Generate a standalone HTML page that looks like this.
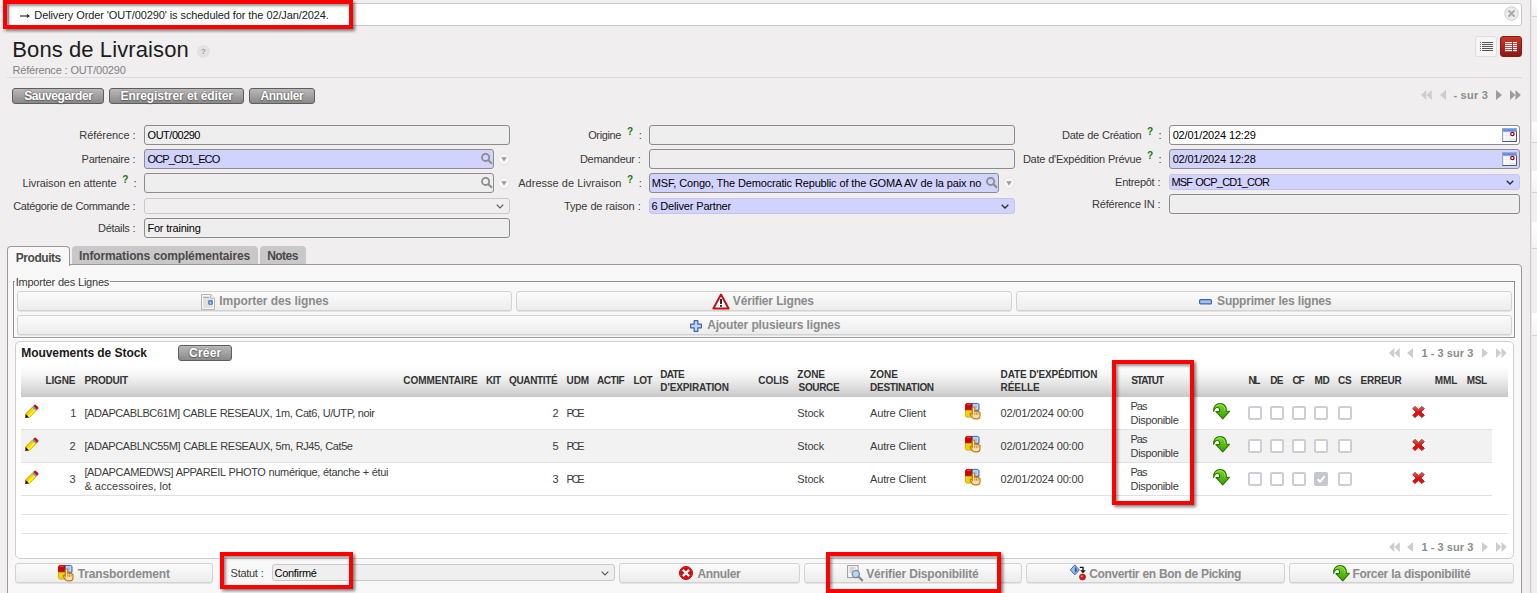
<!DOCTYPE html>
<html lang="fr">
<head>
<meta charset="utf-8">
<title>Bons de Livraison</title>
<style>
*{box-sizing:border-box;margin:0;padding:0}
html,body{width:1537px;height:593px;overflow:hidden}
body{background:#f0eeee;font-family:"Liberation Sans",Arial,sans-serif;font-size:12px;color:#252525;position:relative}
.a{position:absolute;white-space:nowrap}
svg{position:absolute;overflow:visible}
#strip{left:1530px;top:0;width:7px;height:593px;background:#f1efef;border-left:1px solid #cdcbcb;box-shadow:inset 1px 0 0 #e8e6e6}
#strip i{position:absolute;left:1px;width:5px;background:linear-gradient(#fff,#f3f3f3);border-bottom:1px solid #d4d2d2}
#notif{left:8px;top:3px;width:1514px;height:23px;background:#fff;border:1px solid #c9c9c9;border-radius:3px}
.nt{color:#222}
.red{border:4px solid #fe0000;box-shadow:2px 2px 3px rgba(0,0,0,.5), inset 3px 3px 3px -1px rgba(0,0,0,.42)}
.h1{color:#1c1c1c}
.sub{color:#818181}
#hr{left:7px;top:77px;width:1515px;height:1px;background:#dcdada}
.btn{height:16px;border:1px solid #5e5e5e;border-radius:3px;background:linear-gradient(#b9b9b9,#8a8a8a)}
.bt{color:#fff;text-shadow:0 0 2px #555,0 1px 1px #666}
.lbl{color:#3a3a3a}
.q{color:#117a11}
.inp{height:20px;border:1px solid #8c8c8c;border-radius:3px;background:#efeeee}
.req{background:#d2d2ff}
.wht{background:#fff}
.it{color:#000}
.sel{height:16px;border:1px solid #c9c9c9;border-radius:3px;background:#f0eeee}
.sel.req{border-color:#c4c4f0;background:#d2d2ff}
.tab{top:246px;height:18px;background:#c9c7c7;border-radius:4px 4px 0 0}
.tab.on{background:#f9f8f8;border:1px solid #999;border-bottom:none;height:20px}
.tt{color:#4a4a4a}
#tbox{left:7px;top:264px;width:1515px;height:340px;border:1px solid #999;border-radius:0 4px 0 0;background:#f9f8f8}
#fs{left:13px;top:281px;width:1502px;height:57px;border:1px solid #8e8e8e;border-bottom-color:#9a9a9a;box-shadow:inset 1px 1px 0 #fff,1px 1px 0 #fff}
#lgbg{left:15px;top:279px;width:95px;height:5px;background:#f9f8f8}
.wbtn{height:20px;border:1px solid #d2d2d2;border-radius:3px;background:linear-gradient(#fbfbfb,#ececec);box-shadow:0 1px 0 #e4e4e4}
.wt{color:#8b8b8b}
#lbox{left:15px;top:341px;width:1499px;height:218px;border:1px solid #cfcfcf;border-radius:5px;background:#fff}
.lt{color:#1a1a1a}
#hd{left:21px;top:365px;width:1487px;height:32px;background:linear-gradient(#fff 0%,#f6f6f6 30%,#dedede 70%,#c6c6c6 100%)}
.th{color:#333}
.td{color:#3c3c3c}
.pg{color:#8c8c8c}
.row{left:21px;width:1471px;height:33px;border-bottom:1px solid #e0e0e0}
.row.alt{background:#f2f2f2}
.ln{left:21px;width:1487px;height:1px;background:#e2e2e2}
.cb{width:14px;height:14px;border:2px solid #cdcdd5;border-radius:2px;background:#fff}
.cb.on{background:#c6c6ce;border-color:#c6c6ce}
</style>
</head>
<body>
<div id="strip" class="a">
<i style="top:0px;height:17px"></i>
<i style="top:122px;height:21px"></i>
<i style="top:171px;height:22px"></i>
<i style="top:222px;height:27px"></i>
<i style="top:313px;height:23px"></i>
</div>
<div id="notif" class="a"></div>
<svg style="left:20px;top:13px" width="10" height="6" viewBox="0 0 10 6"><path d="M0 3h8" fill="none" stroke="#2a1a1a" stroke-width="1.100"/><path d="M6.600.800L10 3 6.600 5.200 7.400 3z" fill="#2a1a1a"/></svg>
<div class="a nt" style="left:34.30px;top:9.00px;font-size:11px;line-height:13px;letter-spacing:-0.108px;word-spacing:0.108px;">Delivery Order 'OUT/00290' is scheduled for the 02/Jan/2024.</div>
<svg style="left:1504px;top:6px" width="15" height="15" viewBox="0 0 15 15"><circle cx="7.5" cy="7.5" r="6.8" fill="#ececec" stroke="#cfcfcf"/><path d="M5 5l5 5M10 5l-5 5" stroke="#a8a8a8" stroke-width="1.8" stroke-linecap="round"/></svg>
<div class="a h1" style="left:12.30px;top:36.90px;font-size:22px;line-height:26px;letter-spacing:0.114px;word-spacing:-0.114px;">Bons de Livraison</div>
<svg style="left:197px;top:44.500px" width="13" height="13" viewBox="0 0 13 13"><circle cx="6.500" cy="6.500" r="6" fill="#e4e2e2" stroke="#dad8d8" stroke-width=".6"/><text x="6.500" y="9.300" font-size="8" font-weight="bold" fill="#9c9c9c" text-anchor="middle" font-family="Liberation Sans,sans-serif">?</text></svg>
<div class="a sub" style="left:12.60px;top:63.50px;font-size:11px;line-height:13px;letter-spacing:-0.200px;word-spacing:0.200px;">Référence : OUT/00290</div>
<div id="hr" class="a"></div>
<div class="a" style="left:1475px;top:36px;width:22px;height:21px;background:#f6f6f6;border:1px solid #dedede;border-radius:3px"></div>
<svg style="left:1480px;top:42px" width="13" height="10" viewBox="0 0 13 10"><rect x="0" y="0" width="1" height="1" fill="#666"/><rect x="2" y="0" width="11" height="1" fill="#555"/><rect x="0" y="2" width="1" height="1" fill="#666"/><rect x="2" y="2" width="11" height="1" fill="#555"/><rect x="0" y="4" width="1" height="1" fill="#666"/><rect x="2" y="4" width="11" height="1" fill="#555"/><rect x="0" y="6" width="1" height="1" fill="#666"/><rect x="2" y="6" width="11" height="1" fill="#555"/><rect x="0" y="8" width="1" height="1" fill="#666"/><rect x="2" y="8" width="11" height="1" fill="#555"/></svg>
<div class="a" style="left:1500px;top:36px;width:22px;height:21px;background:linear-gradient(#c8372d,#8f1712);border:1px solid #8a1a14;border-radius:3px"></div>
<svg style="left:1505px;top:42px" width="12" height="10" viewBox="0 0 12 10"><rect x="0" y="0" width="7" height="1.2" fill="#fff"/><rect x="8" y="0" width="4" height="1.2" fill="#fff"/><rect x="0" y="2" width="7" height="1.2" fill="#fff"/><rect x="8" y="2" width="4" height="1.2" fill="#fff"/><rect x="0" y="4" width="7" height="1.2" fill="#fff"/><rect x="8" y="4" width="4" height="1.2" fill="#fff"/><rect x="0" y="6" width="7" height="1.2" fill="#fff"/><rect x="8" y="6" width="4" height="1.2" fill="#fff"/><rect x="0" y="8" width="7" height="1.2" fill="#fff"/><rect x="8" y="8" width="4" height="1.2" fill="#fff"/></svg>
<div class="a btn" style="left:12px;top:88px;width:92px"></div>
<div class="a bt" style="left:24.20px;top:89.30px;font-size:12px;line-height:14px;letter-spacing:-0.392px;font-weight:bold;">Sauvegarder</div>
<div class="a btn" style="left:109px;top:88px;width:135px"></div>
<div class="a bt" style="left:120.50px;top:89.30px;font-size:12px;line-height:14px;letter-spacing:-0.087px;word-spacing:0.087px;font-weight:bold;">Enregistrer et éditer</div>
<div class="a btn" style="left:249px;top:88px;width:66px"></div>
<div class="a bt" style="left:260.50px;top:89.30px;font-size:12px;line-height:14px;letter-spacing:-0.355px;font-weight:bold;">Annuler</div>
<svg style="left:1421px;top:89.8px" width="11" height="10" viewBox="0 0 11 10"><path d="M5.300 0v10L0 5zM10.800 0v10L5.500 5z" fill="#cdcdcd"/></svg>
<svg style="left:1439.5px;top:89.8px" width="6" height="10" viewBox="0 0 6 10"><path d="M6 0v10L0 5z" fill="#cdcdcd"/></svg>
<div class="a pg" style="left:1453.40px;top:88.50px;font-size:11px;line-height:13px;letter-spacing:0.350px;word-spacing:-0.350px;font-weight:bold;">- sur 3</div>
<svg style="left:1495.5px;top:89.8px" width="6" height="10" viewBox="0 0 6 10"><path d="M0 0v10l6-5z" fill="#9c9c9c"/></svg>
<svg style="left:1509.5px;top:89.8px" width="11" height="10" viewBox="0 0 11 10"><path d="M0 0v10l5.300-5zM5.500 0v10l5.300-5z" fill="#9c9c9c"/></svg>
<div class="a lbl" style="left:79.30px;top:128.50px;font-size:11px;line-height:13px;letter-spacing:-0.063px;word-spacing:0.063px;">Référence :</div>
<div class="a inp" style="left:144px;top:125px;width:366px"></div>
<div class="a it" style="left:147.60px;top:128.70px;font-size:11px;line-height:13px;letter-spacing:-0.496px;">OUT/00290</div>
<div class="a lbl" style="left:81.60px;top:152.50px;font-size:11px;line-height:13px;letter-spacing:-0.287px;word-spacing:0.287px;">Partenaire :</div>
<div class="a inp req" style="left:144px;top:149px;width:350px"></div>
<div class="a it" style="left:147.60px;top:152.70px;font-size:11px;line-height:13px;letter-spacing:-0.932px;">OCP_CD1_ECO</div>
<svg style="left:481px;top:153.2px" width="12" height="12" viewBox="0 0 12 12"><circle cx="4.600" cy="4.400" r="3.600" fill="none" stroke="#8c8c8c" stroke-width="1.800"/><path d="M7.400 7.200l3.100 3" stroke="#8c8c8c" stroke-width="1.900" stroke-linecap="round"/></svg>
<svg style="left:497.6px;top:152.8px" width="12" height="12" viewBox="0 0 12 12"><circle cx="6" cy="6" r="5.700" fill="#f7f6f6" stroke="#e2e0e0" stroke-width=".8"/><path d="M3.200 4.300h5.600L6 8.400z" fill="#9a9a9a"/></svg>
<div class="a lbl" style="left:22.50px;top:176.50px;font-size:11px;line-height:13px;letter-spacing:-0.118px;word-spacing:0.118px;">Livraison en attente</div>
<div class="a q" style="left:122.30px;top:173.50px;font-size:10px;line-height:12px;letter-spacing:-0.700px;font-weight:bold;">?</div>
<div class="a lbl" style="left:133.50px;top:176.50px;font-size:11px;line-height:13px;letter-spacing:-1.752px;">:</div>
<div class="a inp" style="left:144px;top:173px;width:350px"></div>
<svg style="left:481px;top:177.2px" width="12" height="12" viewBox="0 0 12 12"><circle cx="4.600" cy="4.400" r="3.600" fill="none" stroke="#8c8c8c" stroke-width="1.800"/><path d="M7.400 7.200l3.100 3" stroke="#8c8c8c" stroke-width="1.900" stroke-linecap="round"/></svg>
<svg style="left:497.6px;top:176.8px" width="12" height="12" viewBox="0 0 12 12"><circle cx="6" cy="6" r="5.700" fill="#f7f6f6" stroke="#e2e0e0" stroke-width=".8"/><path d="M3.200 4.300h5.600L6 8.400z" fill="#9a9a9a"/></svg>
<div class="a lbl" style="left:13.20px;top:199.50px;font-size:11px;line-height:13px;letter-spacing:-0.349px;word-spacing:0.349px;">Catégorie de Commande :</div>
<div class="a sel" style="left:144px;top:198px;width:366px"></div>
<svg style="left:496px;top:203.5px" width="8" height="5" viewBox="0 0 8 5"><path d="M.7.7L4 4 7.3.7" fill="none" stroke="#555" stroke-width="1.1"/></svg>
<div class="a lbl" style="left:98.00px;top:221.70px;font-size:11px;line-height:13px;letter-spacing:-0.305px;word-spacing:0.305px;">Détails :</div>
<div class="a inp" style="left:144px;top:218px;width:366px"></div>
<div class="a it" style="left:147.40px;top:221.70px;font-size:11px;line-height:13px;letter-spacing:-0.223px;word-spacing:0.223px;">For training</div>
<div class="a lbl" style="left:588.20px;top:128.50px;font-size:11px;line-height:13px;letter-spacing:-0.379px;">Origine</div>
<div class="a q" style="left:627.00px;top:125.50px;font-size:10px;line-height:12px;letter-spacing:-0.700px;font-weight:bold;">?</div>
<div class="a lbl" style="left:638.80px;top:128.50px;font-size:11px;line-height:13px;letter-spacing:-1.752px;">:</div>
<div class="a inp" style="left:649px;top:125px;width:366px"></div>
<div class="a lbl" style="left:580.00px;top:152.50px;font-size:11px;line-height:13px;letter-spacing:-0.320px;word-spacing:0.320px;">Demandeur :</div>
<div class="a inp" style="left:649px;top:149px;width:366px"></div>
<div class="a lbl" style="left:518.20px;top:176.50px;font-size:11px;line-height:13px;letter-spacing:0.029px;word-spacing:-0.029px;">Adresse de Livraison</div>
<div class="a q" style="left:627.00px;top:173.50px;font-size:10px;line-height:12px;letter-spacing:-0.700px;font-weight:bold;">?</div>
<div class="a lbl" style="left:638.80px;top:176.50px;font-size:11px;line-height:13px;letter-spacing:-1.752px;">:</div>
<div class="a inp req" style="left:649px;top:173px;width:350px"></div>
<div class="a it" style="left:651.80px;top:176.70px;font-size:11px;line-height:13px;letter-spacing:-0.171px;word-spacing:0.171px;">MSF, Congo, The Democratic Republic of the GOMA AV de la paix no</div>
<svg style="left:986px;top:177.2px" width="12" height="12" viewBox="0 0 12 12"><circle cx="4.600" cy="4.400" r="3.600" fill="none" stroke="#8c8c8c" stroke-width="1.800"/><path d="M7.400 7.200l3.100 3" stroke="#8c8c8c" stroke-width="1.900" stroke-linecap="round"/></svg>
<svg style="left:1002.6px;top:176.8px" width="12" height="12" viewBox="0 0 12 12"><circle cx="6" cy="6" r="5.700" fill="#f7f6f6" stroke="#e2e0e0" stroke-width=".8"/><path d="M3.200 4.300h5.600L6 8.400z" fill="#9a9a9a"/></svg>
<div class="a lbl" style="left:564.00px;top:199.50px;font-size:11px;line-height:13px;letter-spacing:-0.130px;word-spacing:0.130px;">Type de raison :</div>
<div class="a sel req" style="left:649px;top:198px;width:366px"></div>
<div class="a it" style="left:651.40px;top:199.50px;font-size:11px;line-height:13px;letter-spacing:-0.195px;word-spacing:0.195px;">6 Deliver Partner</div>
<svg style="left:1001px;top:203.5px" width="8" height="5" viewBox="0 0 8 5"><path d="M.7.7L4 4 7.3.7" fill="none" stroke="#2a2a2a" stroke-width="1.25"/></svg>
<div class="a lbl" style="left:1062.10px;top:128.50px;font-size:11px;line-height:13px;letter-spacing:-0.282px;word-spacing:0.282px;">Date de Création</div>
<div class="a q" style="left:1147.00px;top:125.50px;font-size:10px;line-height:12px;letter-spacing:-0.700px;font-weight:bold;">?</div>
<div class="a lbl" style="left:1158.60px;top:128.50px;font-size:11px;line-height:13px;letter-spacing:-1.752px;">:</div>
<div class="a inp wht" style="left:1169px;top:125px;width:351px"></div>
<div class="a it" style="left:1172.70px;top:128.70px;font-size:11px;line-height:13px;letter-spacing:-0.181px;word-spacing:0.181px;">02/01/2024 12:29</div>
<svg style="left:1502px;top:128px" width="15" height="14" viewBox="0 0 15 14"><rect x=".5" y=".5" width="14" height="13" fill="#e9e9e9" stroke="#9aa6c0"/><path d="M.5 13.500h14v-10" fill="none" stroke="#4a5a80" stroke-width="1"/><rect x="1" y="1" width="13" height="2.600" fill="#5a86e0"/><rect x="1" y=".5" width="13" height="1" fill="#8aaef0"/><path d="M2 5h2.300v2.300H2zM5.200 5h2.300v2.300H5.200zM2 8.200h2.300v2.300H2zM5.200 8.200h2.300v2.300H5.200zM8.400 8.200h2.300v2.300H8.400zM11.400 8.200h2v2.300h-2zM2 11.300h2.300v1.500H2zM5.200 11.300h2.300v1.500H5.200z" fill="#fff"/><circle cx="10.400" cy="6" r="1.700" fill="#fff" stroke="#960c0c" stroke-width="1.200"/></svg>
<div class="a lbl" style="left:1022.90px;top:152.50px;font-size:11px;line-height:13px;letter-spacing:-0.243px;word-spacing:0.243px;">Date d'Expédition Prévue</div>
<div class="a q" style="left:1147.00px;top:149.50px;font-size:10px;line-height:12px;letter-spacing:-0.700px;font-weight:bold;">?</div>
<div class="a lbl" style="left:1158.60px;top:152.50px;font-size:11px;line-height:13px;letter-spacing:-1.752px;">:</div>
<div class="a inp req" style="left:1169px;top:149px;width:351px"></div>
<div class="a it" style="left:1172.70px;top:152.70px;font-size:11px;line-height:13px;letter-spacing:-0.181px;word-spacing:0.181px;">02/01/2024 12:28</div>
<svg style="left:1502px;top:152px" width="15" height="14" viewBox="0 0 15 14"><rect x=".5" y=".5" width="14" height="13" fill="#e9e9e9" stroke="#9aa6c0"/><path d="M.5 13.500h14v-10" fill="none" stroke="#4a5a80" stroke-width="1"/><rect x="1" y="1" width="13" height="2.600" fill="#5a86e0"/><rect x="1" y=".5" width="13" height="1" fill="#8aaef0"/><path d="M2 5h2.300v2.300H2zM5.200 5h2.300v2.300H5.200zM2 8.200h2.300v2.300H2zM5.200 8.200h2.300v2.300H5.200zM8.400 8.200h2.300v2.300H8.400zM11.400 8.200h2v2.300h-2zM2 11.300h2.300v1.500H2zM5.200 11.300h2.300v1.500H5.200z" fill="#fff"/><circle cx="10.400" cy="6" r="1.700" fill="#fff" stroke="#960c0c" stroke-width="1.200"/></svg>
<div class="a lbl" style="left:1115.10px;top:175.50px;font-size:11px;line-height:13px;letter-spacing:-0.286px;word-spacing:0.286px;">Entrepôt :</div>
<div class="a sel req" style="left:1169px;top:174px;width:351px"></div>
<div class="a it" style="left:1171.40px;top:175.50px;font-size:11px;line-height:13px;letter-spacing:-0.784px;word-spacing:0.784px;">MSF OCP_CD1_COR</div>
<svg style="left:1506px;top:179.5px" width="8" height="5" viewBox="0 0 8 5"><path d="M.7.7L4 4 7.3.7" fill="none" stroke="#2a2a2a" stroke-width="1.25"/></svg>
<div class="a lbl" style="left:1092.10px;top:197.50px;font-size:11px;line-height:13px;letter-spacing:-0.229px;word-spacing:0.229px;">Référence IN :</div>
<div class="a inp" style="left:1169px;top:194px;width:351px"></div>
<div id="tbox" class="a"></div>
<div class="a tab on" style="left:7px;width:63px"></div>
<div class="a tt" style="left:15.80px;top:250.60px;font-size:12px;line-height:14px;letter-spacing:-0.466px;font-weight:bold;">Produits</div>
<div class="a tab" style="left:72px;width:186px"></div>
<div class="a tt" style="left:79.00px;top:248.70px;font-size:12px;line-height:14px;letter-spacing:-0.132px;word-spacing:0.132px;font-weight:bold;">Informations complémentaires</div>
<div class="a tab" style="left:260px;width:46px"></div>
<div class="a tt" style="left:267.20px;top:248.70px;font-size:12px;line-height:14px;letter-spacing:-0.533px;font-weight:bold;">Notes</div>
<div id="fs" class="a"></div><div id="lgbg" class="a"></div>
<div class="a lbl" style="left:15.70px;top:276.00px;font-size:11px;line-height:13px;letter-spacing:-0.226px;word-spacing:0.226px;">Importer des Lignes</div>
<div class="a wbtn" style="left:17px;top:291px;width:495px"></div>
<div class="a wbtn" style="left:516px;top:291px;width:496px"></div>
<div class="a wbtn" style="left:1016px;top:291px;width:496px"></div>
<div class="a wbtn" style="left:17px;top:315px;width:1495px"></div>
<svg style="left:201px;top:294px" width="14" height="16" viewBox="0 0 14 16"><path d="M.5.500h9.300l3.700 3.700v11.300H.5z" fill="#dfe1dc" stroke="#b4b4b4"/><path d="M1.500 1.500h8l3 3v10h-11z" fill="none" stroke="#f8f8f8"/><path d="M9.800.500v3.700h3.700" fill="#fafafa" stroke="#b4b4b4"/><path d="M2.200 3.500h5.600" stroke="#c89ac8" stroke-width="1"/><rect x="7" y="6" width="5" height="5" rx="1.400" fill="#5b8cd6"/><path d="M8.600 9.600l.9-2 .9 2z" fill="#dce8fa"/></svg>
<div class="a wt" style="left:219.30px;top:294.30px;font-size:12px;line-height:14px;letter-spacing:-0.075px;word-spacing:0.075px;font-weight:bold;">Importer des lignes</div>
<svg style="left:712px;top:293px" width="18" height="17" viewBox="0 0 18 17"><path d="M9 1.600L16.600 15.500H1.400z" fill="#fff" stroke="#c41010" stroke-width="2" stroke-linejoin="round"/><rect x="8.100" y="6" width="1.800" height="5" fill="#111"/><rect x="8.100" y="12" width="1.800" height="1.800" fill="#111"/></svg>
<div class="a wt" style="left:732.80px;top:294.30px;font-size:12px;line-height:14px;letter-spacing:-0.167px;word-spacing:0.167px;font-weight:bold;">Vérifier Lignes</div>
<svg style="left:1199px;top:299px" width="13" height="6" viewBox="0 0 13 6"><rect x=".6" y=".6" width="11.800" height="4.300" rx="1" fill="#a9c0ea" stroke="#3b64b4" stroke-width="1.200"/></svg>
<div class="a wt" style="left:1217.10px;top:294.30px;font-size:12px;line-height:14px;letter-spacing:-0.221px;word-spacing:0.221px;font-weight:bold;">Supprimer les lignes</div>
<svg style="left:690px;top:320px" width="12" height="12" viewBox="0 0 12 12"><path d="M4.200.6h3.600v3.600h3.600v3.600H7.800v3.600H4.200V7.800H.6V4.200h3.600z" fill="#c5d6f4" stroke="#3b64b4" stroke-width="1.200" stroke-linejoin="round"/></svg>
<div class="a wt" style="left:707.20px;top:318.30px;font-size:12px;line-height:14px;letter-spacing:-0.162px;word-spacing:0.162px;font-weight:bold;">Ajouter plusieurs lignes</div>
<div id="lbox" class="a"></div>
<div class="a lt" style="left:21.30px;top:345.80px;font-size:12px;line-height:14px;letter-spacing:-0.064px;word-spacing:0.064px;font-weight:bold;">Mouvements de Stock</div>
<div class="a btn" style="left:178px;top:345px;width:54px"></div>
<div class="a bt" style="left:189.00px;top:346.40px;font-size:12px;line-height:14px;letter-spacing:0.212px;font-weight:bold;">Créer</div>
<svg style="left:1388.5px;top:348.2px" width="11" height="10" viewBox="0 0 11 10"><path d="M5.300 0v10L0 5zM10.800 0v10L5.500 5z" fill="#cdcdcd"/></svg>
<svg style="left:1407px;top:348.2px" width="6" height="10" viewBox="0 0 6 10"><path d="M6 0v10L0 5z" fill="#cdcdcd"/></svg>
<div class="a pg" style="left:1421.50px;top:346.90px;font-size:11px;line-height:13px;letter-spacing:0.088px;word-spacing:-0.088px;font-weight:bold;">1 - 3 sur 3</div>
<svg style="left:1481.5px;top:348.2px" width="6" height="10" viewBox="0 0 6 10"><path d="M0 0v10l6-5z" fill="#cdcdcd"/></svg>
<svg style="left:1495.5px;top:348.2px" width="11" height="10" viewBox="0 0 11 10"><path d="M0 0v10l5.300-5zM5.500 0v10l5.300-5z" fill="#cdcdcd"/></svg>
<div id="hd" class="a"></div>
<div class="a th" style="left:45.60px;top:374.30px;font-size:10px;line-height:13px;letter-spacing:-0.187px;font-weight:bold;">LIGNE</div>
<div class="a th" style="left:84.60px;top:374.30px;font-size:10px;line-height:13px;letter-spacing:-0.233px;font-weight:bold;">PRODUIT</div>
<div class="a th" style="left:403.30px;top:374.30px;font-size:10px;line-height:13px;letter-spacing:-0.050px;font-weight:bold;">COMMENTAIRE</div>
<div class="a th" style="left:486.10px;top:374.30px;font-size:10px;line-height:13px;letter-spacing:-0.600px;font-weight:bold;">KIT</div>
<div class="a th" style="left:509.10px;top:374.30px;font-size:10px;line-height:13px;letter-spacing:-0.371px;font-weight:bold;">QUANTITÉ</div>
<div class="a th" style="left:566.60px;top:374.30px;font-size:10px;line-height:13px;letter-spacing:-0.188px;font-weight:bold;">UDM</div>
<div class="a th" style="left:597.00px;top:374.30px;font-size:10px;line-height:13px;letter-spacing:-0.462px;font-weight:bold;">ACTIF</div>
<div class="a th" style="left:633.60px;top:374.30px;font-size:10px;line-height:13px;letter-spacing:-0.500px;font-weight:bold;">LOT</div>
<div class="a th" style="left:758.30px;top:374.30px;font-size:10px;line-height:13px;letter-spacing:-0.062px;font-weight:bold;">COLIS</div>
<div class="a th" style="left:1131.20px;top:374.30px;font-size:10px;line-height:13px;letter-spacing:-0.990px;font-weight:bold;">STATUT</div>
<div class="a th" style="left:1248.50px;top:374.30px;font-size:10px;line-height:13px;letter-spacing:-1.425px;font-weight:bold;">NL</div>
<div class="a th" style="left:1270.30px;top:374.30px;font-size:10px;line-height:13px;letter-spacing:-0.800px;font-weight:bold;">DE</div>
<div class="a th" style="left:1292.40px;top:374.30px;font-size:10px;line-height:13px;letter-spacing:-1.025px;font-weight:bold;">CF</div>
<div class="a th" style="left:1314.40px;top:374.30px;font-size:10px;line-height:13px;letter-spacing:-0.150px;font-weight:bold;">MD</div>
<div class="a th" style="left:1338.00px;top:374.30px;font-size:10px;line-height:13px;letter-spacing:-0.100px;font-weight:bold;">CS</div>
<div class="a th" style="left:1360.50px;top:374.30px;font-size:10px;line-height:13px;letter-spacing:-0.205px;font-weight:bold;">ERREUR</div>
<div class="a th" style="left:1434.70px;top:374.30px;font-size:10px;line-height:13px;letter-spacing:0.012px;font-weight:bold;">MML</div>
<div class="a th" style="left:1466.70px;top:374.30px;font-size:10px;line-height:13px;letter-spacing:-0.350px;font-weight:bold;">MSL</div>
<div class="a th" style="left:660.30px;top:368.00px;font-size:10px;line-height:13px;letter-spacing:-0.725px;font-weight:bold;">DATE</div>
<div class="a th" style="left:660.30px;top:381.00px;font-size:10px;line-height:13px;letter-spacing:-0.116px;font-weight:bold;">D'EXPIRATION</div>
<div class="a th" style="left:797.30px;top:368.00px;font-size:10px;line-height:13px;letter-spacing:-0.025px;font-weight:bold;">ZONE</div>
<div class="a th" style="left:798.60px;top:381.00px;font-size:10px;line-height:13px;letter-spacing:-0.355px;font-weight:bold;">SOURCE</div>
<div class="a th" style="left:870.10px;top:368.00px;font-size:10px;line-height:13px;letter-spacing:0.042px;font-weight:bold;">ZONE</div>
<div class="a th" style="left:870.10px;top:381.00px;font-size:10px;line-height:13px;letter-spacing:-0.305px;font-weight:bold;">DESTINATION</div>
<div class="a th" style="left:1000.60px;top:368.00px;font-size:10px;line-height:13px;letter-spacing:-0.175px;word-spacing:0.175px;font-weight:bold;">DATE D'EXPÉDITION</div>
<div class="a th" style="left:1000.60px;top:381.00px;font-size:10px;line-height:13px;letter-spacing:-0.090px;font-weight:bold;">RÉELLE</div>
<div class="a row" style="top:397px"></div>
<svg style="left:25px;top:405px" width="13" height="13" viewBox="0 0 12.300 12.300"><path d="M.5 8.600L7.200 1.900l3.300 3.300L3.800 11.900z" fill="#ffd000" stroke="#d08a00" stroke-width=".9"/><path d="M3 10.900L9.500 4.400" stroke="#ffff00" stroke-width="1.700"/><path d="M6.900 2.200l.9-.9 3.300 3.300-.9.900z" fill="#44a8ff"/><path d="M8.100 1l.6-.6c.5-.5 1.300-.5 1.800 0l1.500 1.500c.5.500.5 1.300 0 1.800l-.6.600z" fill="#e00000" stroke="#a00000" stroke-width=".6"/><path d="M.5 8.600L.2 12.200l3.600-.3z" fill="#111"/></svg>
<div class="a td" style="left:70.20px;top:406.80px;font-size:11px;line-height:13px;letter-spacing:-1.705px;">1</div>
<div class="a td" style="left:84.40px;top:406.80px;font-size:11px;line-height:13px;letter-spacing:-0.412px;word-spacing:0.412px;">[ADAPCABLBC61M] CABLE RESEAUX, 1m, Cat6, U/UTP, noir</div>
<div class="a td" style="left:552.40px;top:406.80px;font-size:11px;line-height:13px;letter-spacing:-1.005px;">2</div>
<div class="a td" style="left:566.60px;top:406.80px;font-size:11px;line-height:13px;letter-spacing:-2.353px;">PCE</div>
<div class="a td" style="left:797.30px;top:406.80px;font-size:11px;line-height:13px;letter-spacing:-0.157px;">Stock</div>
<div class="a td" style="left:870.00px;top:406.80px;font-size:11px;line-height:13px;letter-spacing:-0.148px;word-spacing:0.148px;">Autre Client</div>
<svg style="left:965px;top:403px" width="17" height="17" viewBox="0 0 17 17"><rect x=".5" y=".5" width="13.500" height="13.500" rx="1.800" fill="#fff" stroke="none"/><path d="M2 .4h5.200v6.900H.4V2c0-.9.700-1.600 1.600-1.600z" fill="#cc0000" stroke="#a40000" stroke-width=".8"/><path d="M7.200.4h5.200c.9 0 1.600.7 1.600 1.600v5.300H7.200z" fill="#9cc0ee" stroke="#2c5aa0" stroke-width=".9"/><path d="M8.600 1.800h4v4h-4z" fill="none" stroke="#d6e6fa" stroke-width=".8"/><path d="M.4 7.300h6.800v6.800H2c-.9 0-1.600-.7-1.600-1.600z" fill="#edd400" stroke="#c4a000" stroke-width=".8"/><path d="M1.800 1.700h4" stroke="#ef6a6a" stroke-width=".7"/><path d="M8.600 4c.8 0 1.200.5 1.200 1.300v3.100h.3c.3-.5 1.300-.5 1.600.2.500-.4 1.400-.3 1.600.4.700-.3 1.700.1 1.700 1v2.600c0 2-1.200 3.300-3 3.300H9.800c-1.200 0-2-.5-2.700-1.500L5.300 11.600c-.5-.8.500-1.600 1.200-1l.8.800V5.300c0-.8.500-1.300 1.300-1.300z" fill="#fce0b4" stroke="#c47a10" stroke-width="1.200"/><path d="M9.800 9.500v2.200M11.400 9.700v2M13 10v1.700" stroke="#c47a10" stroke-width=".9"/></svg>
<div class="a td" style="left:1000.60px;top:406.80px;font-size:11px;line-height:13px;letter-spacing:-0.195px;word-spacing:0.195px;">02/01/2024 00:00</div>
<div class="a td" style="left:1130.60px;top:399.90px;font-size:11px;line-height:13px;letter-spacing:-1.074px;">Pas</div>
<div class="a td" style="left:1130.60px;top:413.70px;font-size:11px;line-height:13px;letter-spacing:-0.352px;">Disponible</div>
<svg style="left:1212.5px;top:402.5px" width="17" height="17" viewBox="0 0 17 17"><defs><linearGradient id="gg" x1="0" y1="0" x2="0" y2="1"><stop offset="0" stop-color="#78dc1e"/><stop offset="1" stop-color="#3c9c0a"/></linearGradient></defs><path d="M.6 8.400C.1 3.900 2.900.6 7.100.6c4.100 0 6.300 3 6.300 7.700h3l-6.600 7.600-6.900-7.300h3.700c.3-2.600-.5-4.400-2.100-4.400C2.600 4.200 1.500 5.800.6 8.400z" fill="url(#gg)" stroke="#2a7600" stroke-width="1.100" stroke-linejoin="round"/><path d="M2.400 4.100C3.500 2.500 5 1.700 7 1.700c3 0 4.900 2.200 5.200 5.900" fill="none" stroke="#a8ec6c" stroke-width=".8"/></svg>
<div class="a cb" style="left:1248px;top:406px"></div>
<div class="a cb" style="left:1270px;top:406px"></div>
<div class="a cb" style="left:1292px;top:406px"></div>
<div class="a cb" style="left:1314px;top:406px"></div>
<div class="a cb" style="left:1338px;top:406px"></div>
<svg style="left:1412px;top:405.5px" width="13" height="12" viewBox="0 0 12.400 12"><defs><linearGradient id="rx" x1="0" y1="0" x2="0" y2="1"><stop offset="0" stop-color="#dc6a6a"/><stop offset=".5" stop-color="#d81414"/><stop offset="1" stop-color="#fa0000"/></linearGradient></defs><path d="M.4 2.700L2.700.4l3.500 3.300L9.700.4 12 2.700 8.600 6 12 9.300 9.700 11.600 6.200 8.300 2.700 11.600.4 9.300 3.800 6z" fill="url(#rx)" stroke="#a40808" stroke-width=".8" stroke-linejoin="round"/></svg>
<div class="a row alt" style="top:430px"></div>
<svg style="left:25px;top:438px" width="13" height="13" viewBox="0 0 12.300 12.300"><path d="M.5 8.600L7.200 1.900l3.300 3.300L3.800 11.900z" fill="#ffd000" stroke="#d08a00" stroke-width=".9"/><path d="M3 10.900L9.500 4.400" stroke="#ffff00" stroke-width="1.700"/><path d="M6.900 2.200l.9-.9 3.300 3.300-.9.900z" fill="#44a8ff"/><path d="M8.100 1l.6-.6c.5-.5 1.300-.5 1.800 0l1.500 1.500c.5.500.5 1.300 0 1.800l-.6.600z" fill="#e00000" stroke="#a00000" stroke-width=".6"/><path d="M.5 8.600L.2 12.200l3.600-.3z" fill="#111"/></svg>
<div class="a td" style="left:69.60px;top:439.80px;font-size:11px;line-height:13px;letter-spacing:-1.105px;">2</div>
<div class="a td" style="left:84.40px;top:439.80px;font-size:11px;line-height:13px;letter-spacing:-0.423px;word-spacing:0.423px;">[ADAPCABLNC55M] CABLE RESEAUX, 5m, RJ45, Cat5e</div>
<div class="a td" style="left:552.40px;top:439.80px;font-size:11px;line-height:13px;letter-spacing:-1.005px;">5</div>
<div class="a td" style="left:566.60px;top:439.80px;font-size:11px;line-height:13px;letter-spacing:-2.353px;">PCE</div>
<div class="a td" style="left:797.30px;top:439.80px;font-size:11px;line-height:13px;letter-spacing:-0.157px;">Stock</div>
<div class="a td" style="left:870.00px;top:439.80px;font-size:11px;line-height:13px;letter-spacing:-0.148px;word-spacing:0.148px;">Autre Client</div>
<svg style="left:965px;top:436px" width="17" height="17" viewBox="0 0 17 17"><rect x=".5" y=".5" width="13.500" height="13.500" rx="1.800" fill="#fff" stroke="none"/><path d="M2 .4h5.200v6.900H.4V2c0-.9.700-1.600 1.600-1.600z" fill="#cc0000" stroke="#a40000" stroke-width=".8"/><path d="M7.200.4h5.200c.9 0 1.600.7 1.600 1.600v5.300H7.200z" fill="#9cc0ee" stroke="#2c5aa0" stroke-width=".9"/><path d="M8.600 1.800h4v4h-4z" fill="none" stroke="#d6e6fa" stroke-width=".8"/><path d="M.4 7.300h6.800v6.800H2c-.9 0-1.600-.7-1.600-1.600z" fill="#edd400" stroke="#c4a000" stroke-width=".8"/><path d="M1.800 1.700h4" stroke="#ef6a6a" stroke-width=".7"/><path d="M8.600 4c.8 0 1.200.5 1.200 1.300v3.100h.3c.3-.5 1.300-.5 1.600.2.500-.4 1.400-.3 1.600.4.700-.3 1.700.1 1.700 1v2.600c0 2-1.200 3.300-3 3.300H9.800c-1.200 0-2-.5-2.700-1.500L5.300 11.600c-.5-.8.500-1.600 1.200-1l.8.800V5.300c0-.8.500-1.300 1.300-1.300z" fill="#fce0b4" stroke="#c47a10" stroke-width="1.200"/><path d="M9.800 9.500v2.200M11.400 9.700v2M13 10v1.700" stroke="#c47a10" stroke-width=".9"/></svg>
<div class="a td" style="left:1000.60px;top:439.80px;font-size:11px;line-height:13px;letter-spacing:-0.195px;word-spacing:0.195px;">02/01/2024 00:00</div>
<div class="a td" style="left:1130.60px;top:432.90px;font-size:11px;line-height:13px;letter-spacing:-1.074px;">Pas</div>
<div class="a td" style="left:1130.60px;top:446.70px;font-size:11px;line-height:13px;letter-spacing:-0.352px;">Disponible</div>
<svg style="left:1212.5px;top:435.5px" width="17" height="17" viewBox="0 0 17 17"><defs><linearGradient id="gg" x1="0" y1="0" x2="0" y2="1"><stop offset="0" stop-color="#78dc1e"/><stop offset="1" stop-color="#3c9c0a"/></linearGradient></defs><path d="M.6 8.400C.1 3.900 2.900.6 7.100.6c4.100 0 6.300 3 6.300 7.700h3l-6.600 7.600-6.900-7.300h3.700c.3-2.600-.5-4.400-2.100-4.400C2.600 4.200 1.500 5.800.6 8.400z" fill="url(#gg)" stroke="#2a7600" stroke-width="1.100" stroke-linejoin="round"/><path d="M2.400 4.100C3.500 2.500 5 1.700 7 1.700c3 0 4.900 2.200 5.200 5.900" fill="none" stroke="#a8ec6c" stroke-width=".8"/></svg>
<div class="a cb" style="left:1248px;top:439px"></div>
<div class="a cb" style="left:1270px;top:439px"></div>
<div class="a cb" style="left:1292px;top:439px"></div>
<div class="a cb" style="left:1314px;top:439px"></div>
<div class="a cb" style="left:1338px;top:439px"></div>
<svg style="left:1412px;top:438.5px" width="13" height="12" viewBox="0 0 12.400 12"><defs><linearGradient id="rx" x1="0" y1="0" x2="0" y2="1"><stop offset="0" stop-color="#dc6a6a"/><stop offset=".5" stop-color="#d81414"/><stop offset="1" stop-color="#fa0000"/></linearGradient></defs><path d="M.4 2.700L2.700.4l3.500 3.300L9.700.4 12 2.700 8.600 6 12 9.300 9.700 11.600 6.200 8.300 2.700 11.600.4 9.300 3.800 6z" fill="url(#rx)" stroke="#a40808" stroke-width=".8" stroke-linejoin="round"/></svg>
<div class="a row" style="top:463px"></div>
<svg style="left:25px;top:471px" width="13" height="13" viewBox="0 0 12.300 12.300"><path d="M.5 8.600L7.200 1.900l3.300 3.300L3.800 11.900z" fill="#ffd000" stroke="#d08a00" stroke-width=".9"/><path d="M3 10.900L9.500 4.400" stroke="#ffff00" stroke-width="1.700"/><path d="M6.900 2.200l.9-.9 3.300 3.300-.9.900z" fill="#44a8ff"/><path d="M8.100 1l.6-.6c.5-.5 1.300-.5 1.800 0l1.500 1.500c.5.500.5 1.300 0 1.800l-.6.600z" fill="#e00000" stroke="#a00000" stroke-width=".6"/><path d="M.5 8.600L.2 12.200l3.600-.3z" fill="#111"/></svg>
<div class="a td" style="left:69.60px;top:472.80px;font-size:11px;line-height:13px;letter-spacing:-1.105px;">3</div>
<div class="a td" style="left:84.40px;top:466.00px;font-size:11px;line-height:13px;letter-spacing:-0.361px;word-spacing:0.361px;">[ADAPCAMEDWS] APPAREIL PHOTO numérique, étanche + étui</div>
<div class="a td" style="left:84.40px;top:479.80px;font-size:11px;line-height:13px;letter-spacing:0.039px;word-spacing:-0.039px;">&amp; accessoires, lot</div>
<div class="a td" style="left:552.40px;top:472.80px;font-size:11px;line-height:13px;letter-spacing:-1.005px;">3</div>
<div class="a td" style="left:566.60px;top:472.80px;font-size:11px;line-height:13px;letter-spacing:-2.353px;">PCE</div>
<div class="a td" style="left:797.30px;top:472.80px;font-size:11px;line-height:13px;letter-spacing:-0.157px;">Stock</div>
<div class="a td" style="left:870.00px;top:472.80px;font-size:11px;line-height:13px;letter-spacing:-0.148px;word-spacing:0.148px;">Autre Client</div>
<svg style="left:965px;top:469px" width="17" height="17" viewBox="0 0 17 17"><rect x=".5" y=".5" width="13.500" height="13.500" rx="1.800" fill="#fff" stroke="none"/><path d="M2 .4h5.200v6.900H.4V2c0-.9.700-1.600 1.600-1.600z" fill="#cc0000" stroke="#a40000" stroke-width=".8"/><path d="M7.200.4h5.200c.9 0 1.600.7 1.600 1.600v5.300H7.200z" fill="#9cc0ee" stroke="#2c5aa0" stroke-width=".9"/><path d="M8.600 1.800h4v4h-4z" fill="none" stroke="#d6e6fa" stroke-width=".8"/><path d="M.4 7.300h6.800v6.800H2c-.9 0-1.600-.7-1.600-1.600z" fill="#edd400" stroke="#c4a000" stroke-width=".8"/><path d="M1.800 1.700h4" stroke="#ef6a6a" stroke-width=".7"/><path d="M8.600 4c.8 0 1.200.5 1.200 1.300v3.100h.3c.3-.5 1.300-.5 1.600.2.500-.4 1.400-.3 1.600.4.700-.3 1.700.1 1.700 1v2.600c0 2-1.200 3.300-3 3.300H9.800c-1.200 0-2-.5-2.700-1.500L5.300 11.600c-.5-.8.500-1.600 1.200-1l.8.800V5.300c0-.8.500-1.300 1.300-1.300z" fill="#fce0b4" stroke="#c47a10" stroke-width="1.200"/><path d="M9.800 9.500v2.200M11.400 9.700v2M13 10v1.700" stroke="#c47a10" stroke-width=".9"/></svg>
<div class="a td" style="left:1000.60px;top:472.80px;font-size:11px;line-height:13px;letter-spacing:-0.195px;word-spacing:0.195px;">02/01/2024 00:00</div>
<div class="a td" style="left:1130.60px;top:465.90px;font-size:11px;line-height:13px;letter-spacing:-1.074px;">Pas</div>
<div class="a td" style="left:1130.60px;top:479.70px;font-size:11px;line-height:13px;letter-spacing:-0.352px;">Disponible</div>
<svg style="left:1212.5px;top:468.5px" width="17" height="17" viewBox="0 0 17 17"><defs><linearGradient id="gg" x1="0" y1="0" x2="0" y2="1"><stop offset="0" stop-color="#78dc1e"/><stop offset="1" stop-color="#3c9c0a"/></linearGradient></defs><path d="M.6 8.400C.1 3.900 2.900.6 7.100.6c4.100 0 6.300 3 6.300 7.700h3l-6.600 7.600-6.900-7.300h3.700c.3-2.600-.5-4.400-2.100-4.400C2.600 4.200 1.500 5.800.6 8.400z" fill="url(#gg)" stroke="#2a7600" stroke-width="1.100" stroke-linejoin="round"/><path d="M2.400 4.100C3.500 2.500 5 1.700 7 1.700c3 0 4.900 2.200 5.200 5.900" fill="none" stroke="#a8ec6c" stroke-width=".8"/></svg>
<div class="a cb" style="left:1248px;top:472px"></div>
<div class="a cb" style="left:1270px;top:472px"></div>
<div class="a cb" style="left:1292px;top:472px"></div>
<div class="a cb on" style="left:1314px;top:472px"></div>
<svg style="left:1314px;top:472px" width="14" height="14" viewBox="0 0 14 14"><path d="M3.500 7.200l2.500 2.600 4.600-5.600" fill="none" stroke="#fff" stroke-width="2"/></svg>
<div class="a cb" style="left:1338px;top:472px"></div>
<svg style="left:1412px;top:471.5px" width="13" height="12" viewBox="0 0 12.400 12"><defs><linearGradient id="rx" x1="0" y1="0" x2="0" y2="1"><stop offset="0" stop-color="#dc6a6a"/><stop offset=".5" stop-color="#d81414"/><stop offset="1" stop-color="#fa0000"/></linearGradient></defs><path d="M.4 2.700L2.700.4l3.500 3.300L9.700.4 12 2.700 8.600 6 12 9.300 9.700 11.600 6.200 8.300 2.700 11.600.4 9.300 3.800 6z" fill="url(#rx)" stroke="#a40808" stroke-width=".8" stroke-linejoin="round"/></svg>
<div class="a ln" style="top:514px"></div><div class="a ln" style="top:533px"></div>
<svg style="left:1388.5px;top:541.5999999999999px" width="11" height="10" viewBox="0 0 11 10"><path d="M5.300 0v10L0 5zM10.800 0v10L5.500 5z" fill="#cdcdcd"/></svg>
<svg style="left:1407px;top:541.5999999999999px" width="6" height="10" viewBox="0 0 6 10"><path d="M6 0v10L0 5z" fill="#cdcdcd"/></svg>
<div class="a pg" style="left:1421.50px;top:541.20px;font-size:11px;line-height:13px;letter-spacing:0.088px;word-spacing:-0.088px;font-weight:bold;">1 - 3 sur 3</div>
<svg style="left:1481.5px;top:541.5999999999999px" width="6" height="10" viewBox="0 0 6 10"><path d="M0 0v10l6-5z" fill="#cdcdcd"/></svg>
<svg style="left:1495.5px;top:541.5999999999999px" width="11" height="10" viewBox="0 0 11 10"><path d="M0 0v10l5.300-5zM5.500 0v10l5.300-5z" fill="#cdcdcd"/></svg>
<div class="a wbtn" style="left:15px;top:563px;width:198px"></div>
<svg style="left:58px;top:565px" width="17" height="17" viewBox="0 0 17 17"><rect x=".5" y=".5" width="13.500" height="13.500" rx="1.800" fill="#fff" stroke="none"/><path d="M2 .4h5.200v6.900H.4V2c0-.9.700-1.600 1.600-1.600z" fill="#cc0000" stroke="#a40000" stroke-width=".8"/><path d="M7.200.4h5.200c.9 0 1.600.7 1.600 1.600v5.300H7.200z" fill="#9cc0ee" stroke="#2c5aa0" stroke-width=".9"/><path d="M8.600 1.800h4v4h-4z" fill="none" stroke="#d6e6fa" stroke-width=".8"/><path d="M.4 7.300h6.800v6.800H2c-.9 0-1.600-.7-1.600-1.600z" fill="#edd400" stroke="#c4a000" stroke-width=".8"/><path d="M1.800 1.700h4" stroke="#ef6a6a" stroke-width=".7"/><path d="M8.600 4c.8 0 1.200.5 1.200 1.300v3.100h.3c.3-.5 1.300-.5 1.600.2.500-.4 1.400-.3 1.600.4.700-.3 1.700.1 1.700 1v2.600c0 2-1.200 3.300-3 3.300H9.800c-1.200 0-2-.5-2.700-1.500L5.300 11.600c-.5-.8.500-1.600 1.200-1l.8.800V5.300c0-.8.500-1.300 1.300-1.300z" fill="#fce0b4" stroke="#c47a10" stroke-width="1.200"/><path d="M9.800 9.500v2.200M11.400 9.700v2M13 10v1.700" stroke="#c47a10" stroke-width=".9"/></svg>
<div class="a wt" style="left:77.70px;top:566.70px;font-size:12px;line-height:14px;letter-spacing:-0.132px;font-weight:bold;">Transbordement</div>
<div class="a lbl" style="left:230.60px;top:566.50px;font-size:11px;line-height:13px;letter-spacing:-0.290px;word-spacing:0.290px;">Statut :</div>
<div class="a sel" style="left:272px;top:564px;width:343px;height:17px;background:#efefef"></div>
<div class="a it" style="left:274.60px;top:566.60px;font-size:11px;line-height:13px;letter-spacing:-0.319px;">Confirmé</div>
<svg style="left:601px;top:570.5px" width="8" height="5" viewBox="0 0 8 5"><path d="M.7.7L4 4 7.3.7" fill="none" stroke="#555" stroke-width="1.1"/></svg>
<div class="a wbtn" style="left:619px;top:563px;width:181px"></div>
<svg style="left:679px;top:566px" width="14" height="14" viewBox="0 0 14 14"><circle cx="7" cy="7" r="6.500" fill="#e21c1c" stroke="#c00808" stroke-width="1"/><circle cx="7" cy="7" r="5.200" fill="#cc0a0a"/><path d="M4.700 4.700l4.600 4.600M9.300 4.700l-4.600 4.600" stroke="#fff" stroke-width="2.300" stroke-linecap="square"/></svg>
<div class="a wt" style="left:697.40px;top:566.70px;font-size:12px;line-height:14px;letter-spacing:-0.338px;font-weight:bold;">Annuler</div>
<div class="a wbtn" style="left:804px;top:563px;width:218px"></div>
<svg style="left:846.500px;top:564.500px" width="17" height="17" viewBox="0 0 17 17"><rect x=".6" y=".6" width="10.500" height="12" fill="#fafafa" stroke="#9a9a9a" stroke-width="1"/><path d="M2.500 3h6M2.500 5h4M2.500 7h3" stroke="#b0b0b0" stroke-width="1"/><circle cx="8.800" cy="9" r="3.600" fill="#b8d4f4" stroke="#7a8aa0" stroke-width="1.300"/><path d="M11.600 11.800l3.600 3.600" stroke="#8a8a8a" stroke-width="2.200" stroke-linecap="round"/></svg>
<div class="a wt" style="left:866.30px;top:566.70px;font-size:12px;line-height:14px;letter-spacing:-0.215px;word-spacing:0.215px;font-weight:bold;">Vérifier Disponibilité</div>
<div class="a wbtn" style="left:1026px;top:563px;width:259px"></div>
<svg style="left:1069.500px;top:564px" width="16" height="17" viewBox="0 0 16 17"><path d="M4.800.900L9.300 5.900 4.800 10.900.3 5.900z" fill="#9dbce8" stroke="#2f5fa6" stroke-width=".9"/><path d="M4.800 2.600L7.600 5.900 4.800 9.200z" fill="#2f62b0"/><path d="M9.800 3.300h3.200v3.200" fill="none" stroke="#111" stroke-width="1.300"/><path d="M10.200 6.200h5.600L13 9.200z" fill="#111"/><circle cx="12.500" cy="13" r="3" fill="#d41c1c" stroke="#980c0c" stroke-width=".7"/><circle cx="11.700" cy="12.200" r="1" fill="#f08a8a"/></svg>
<div class="a wt" style="left:1089.30px;top:566.70px;font-size:12px;line-height:14px;letter-spacing:-0.391px;word-spacing:0.391px;font-weight:bold;">Convertir en Bon de Picking</div>
<div class="a wbtn" style="left:1289px;top:563px;width:225px"></div>
<svg style="left:1332.5px;top:565px" width="17" height="17" viewBox="0 0 17 17"><defs><linearGradient id="gg" x1="0" y1="0" x2="0" y2="1"><stop offset="0" stop-color="#78dc1e"/><stop offset="1" stop-color="#3c9c0a"/></linearGradient></defs><path d="M.6 8.400C.1 3.900 2.900.6 7.100.6c4.100 0 6.300 3 6.300 7.700h3l-6.600 7.600-6.900-7.300h3.700c.3-2.600-.5-4.400-2.100-4.400C2.600 4.200 1.500 5.800.6 8.400z" fill="url(#gg)" stroke="#2a7600" stroke-width="1.100" stroke-linejoin="round"/><path d="M2.400 4.100C3.500 2.500 5 1.700 7 1.700c3 0 4.900 2.200 5.200 5.900" fill="none" stroke="#a8ec6c" stroke-width=".8"/></svg>
<div class="a wt" style="left:1352.50px;top:566.70px;font-size:12px;line-height:14px;letter-spacing:-0.329px;word-spacing:0.329px;font-weight:bold;">Forcer la disponibilité</div>
<div class="a red" style="left:3px;top:0px;width:350px;height:29px"></div>
<div class="a red" style="left:1112px;top:360px;width:82px;height:144.500px"></div>
<div class="a red" style="left:220px;top:552px;width:132.500px;height:37px"></div>
<div class="a red" style="left:826px;top:552px;width:175px;height:41px"></div>
</body>
</html>
